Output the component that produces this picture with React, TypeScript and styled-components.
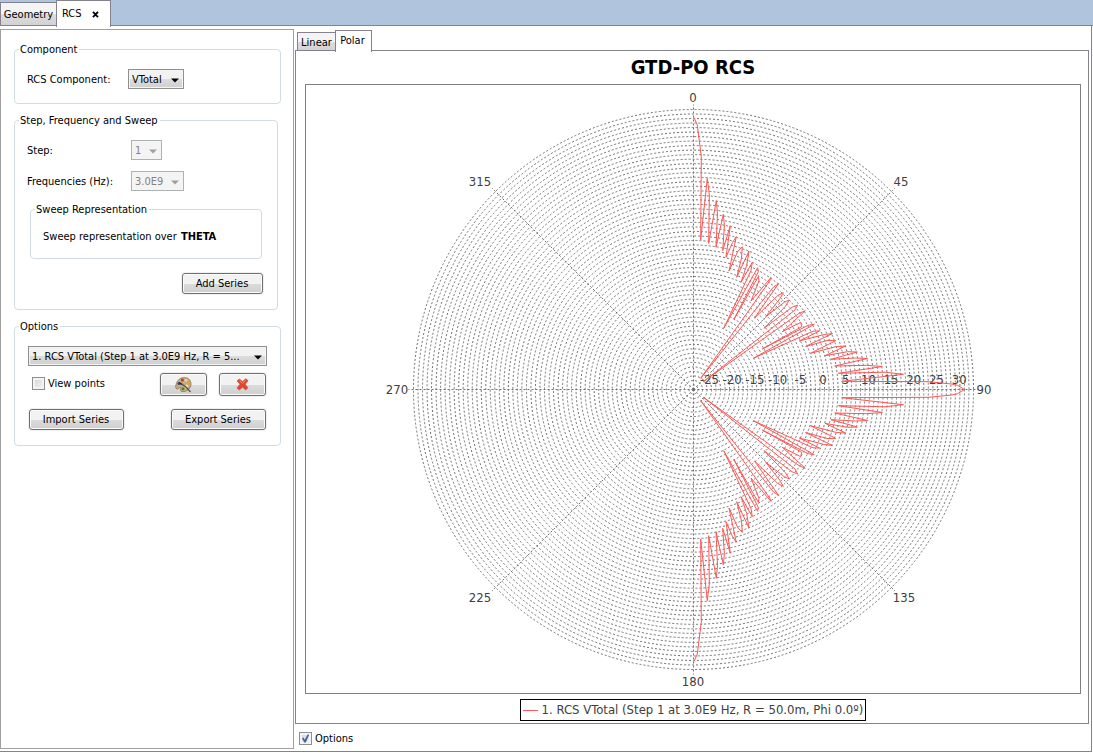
import React from "react";
import styled, { createGlobalStyle, css } from "styled-components";

const GlobalStyle = createGlobalStyle`
  *, *::before, *::after { box-sizing: border-box; }
  body {
    margin: 0;
    background: #fff;
    color: #000;
    font: 11px/14px "DejaVu Sans Condensed", "DejaVu Sans", sans-serif;
  }
`;

const Page = styled.div`
  display: flex;
  flex-direction: column;
  min-height: 100vh;
  padding: 0 1px 2px 0;
`;

const TopTabs = styled.nav`
  display: flex;
  align-items: flex-end;
  height: 26px;
  margin-right: -1px;
  background: #b0c4de;
  box-shadow: inset 0 -1px #83838f;
`;

const tabBase = css`
  position: relative;
  display: flex;
  align-items: center;
  justify-content: center;
  padding: 2px 0 0;
  border: 1px solid #83838f;
  color: #000;
  font: inherit;
  white-space: nowrap;
`;

const Tab = styled.button<{ $active?: boolean; $width: number }>`
  ${tabBase}
  width: ${(p) => p.$width}px;
  ${(p) =>
    p.$active
      ? css`
          align-self: stretch;
          justify-content: flex-start;
          margin: 0 0 -1px -1px;
          padding: 0 0 0 5px;
          gap: 10px;
          border-bottom: 0;
          background: #fff;
          z-index: 1;
        `
      : css`
          height: 24px;
          background: linear-gradient(#f4f4f4 0 50%, #dedede 50%, #d2d2d2);
        `}
`;

const Workspace = styled.main`
  display: flex;
  flex: 1;
  border: solid #83838f;
  border-width: 0 1px 1px 0;
`;

const Sidebar = styled.aside`
  display: flex;
  flex-direction: column;
  flex: 0 0 294px;
  margin: 3px 0 2px;
  padding: 11px 12px 12px 13px;
  border: 1px solid #a0a0a0;
`;

const Group = styled.fieldset<{ $inset?: number; $after?: number }>`
  min-width: 0;
  margin: 0 ${(p) => p.$inset ?? 0}px ${(p) => p.$after ?? 0}px 0;
  padding: 0;
  border: 1px solid #d0dce4;
  border-radius: 4px;
`;

const NestedGroup = styled(Group)`
  margin: 10px 15px 14px 15px;
`;

const GroupTitle = styled.legend`
  margin-left: 4px;
  padding: 2px 2px 0 1px;
  line-height: 14px;
`;

const Field = styled.div<{ $label: number }>`
  display: grid;
  grid-template-columns: ${(p) => p.$label}px auto;
  align-items: center;
  justify-content: start;
  padding-left: 12px;
`;

const FieldLabel = styled.label`
  padding-top: 2px;
`;

const FieldStack = styled.div<{ $pad: string }>`
  display: flex;
  flex-direction: column;
  gap: 11px;
  padding: ${(p) => p.$pad};
`;

const SelectBox = styled.span<{ $width: number }>`
  position: relative;
  display: block;
  width: ${(p) => p.$width}px;
`;

const SelectInput = styled.select`
  display: block;
  width: 100%;
  height: 20px;
  padding: 2px 0 0 3px;
  appearance: none;
  border: 1px solid #8e8f8f;
  border-radius: 0;
  background: linear-gradient(#f2f2f2 0 50%, #dddddd 50%, #cfcfcf);
  box-shadow: inset 0 0 0 1px #f4f4f4;
  color: #000;
  font: inherit;

  &:disabled {
    border-color: #adb2b5;
    background: #f4f4f4;
    color: #838383;
    opacity: 1;
  }
`;

const SelectArrow = styled.svg`
  position: absolute;
  right: 5px;
  top: 9px;
  pointer-events: none;
`;

const Note = styled.p`
  margin: 0;
  padding: 13px 0 14px 12px;
  line-height: 14px;
`;

const Strong = styled.strong`
  margin-left: 1px;
`;

const Button = styled.button<{ $width: number; $tall?: boolean }>`
  display: flex;
  align-items: center;
  justify-content: center;
  width: ${(p) => p.$width}px;
  height: ${(p) => (p.$tall ? 23 : 21)}px;
  padding: 0 1px 0 0;
  border: 1px solid #707070;
  border-radius: 3px;
  background: linear-gradient(#f2f2f2 0 50%, #dcdcdc 50%, #cfcfcf);
  box-shadow: inset 0 0 0 1px #fbfbfb, 0 0 0 1px #f0f0f0;
  color: #000;
  font: inherit;
`;

const Row = styled.div<{ $pad: string; $justify?: string }>`
  display: flex;
  align-items: center;
  justify-content: ${(p) => p.$justify ?? "space-between"};
  padding: ${(p) => p.$pad};
`;

const IconButtons = styled.div`
  display: flex;
  gap: 12px;
`;

const CheckLabel = styled.label`
  display: inline-flex;
  align-items: center;
  gap: 3px;
  padding-bottom: 2px;
`;

const CheckBox = styled.span`
  position: relative;
  display: block;
  width: 13px;
  height: 13px;
`;

const CheckInput = styled.input`
  display: block;
  width: 13px;
  height: 13px;
  margin: 0;
  appearance: none;
  border: 1px solid #8e8f8f;
  background: linear-gradient(135deg, #cfd3d8, #f6f6f6);
  box-shadow: inset 0 0 0 2px #f4f4f4;

  & + svg {
    position: absolute;
    inset: 0;
    visibility: hidden;
    pointer-events: none;
  }

  &:checked + svg {
    visibility: visible;
  }
`;

const Viewer = styled.section`
  display: flex;
  flex: 1;
  flex-direction: column;
  min-width: 0;
  padding: 4px 2px 0 1px;
`;

const ViewTabs = styled.nav`
  display: flex;
  align-items: flex-end;
  height: 21px;
  padding-left: 2px;
`;

const ViewTab = styled.button<{ $active?: boolean; $width: number }>`
  ${tabBase}
  width: ${(p) => p.$width}px;
  height: ${(p) => (p.$active ? 22 : 19)}px;
  ${(p) =>
    p.$active
      ? css`
          margin: 0 0 -1px -1px;
          padding: 0 2px 2px 0;
          border-bottom: 0;
          background: #fff;
          z-index: 1;
        `
      : css`
          background: linear-gradient(#f4f4f4 0 50%, #dedede 50%, #d2d2d2);
        `}
`;

const ChartPanel = styled.figure`
  display: flex;
  flex: 1;
  flex-direction: column;
  align-items: center;
  margin: -1px 0 0;
  padding: 5px 7px 2px 9px;
  border: 1px solid #83838f;
`;

const ChartTitle = styled.h1`
  margin: 0 0 6px;
  font-size: 20px;
  line-height: 22px;
`;

const PlotFrame = styled.div`
  display: grid;
  flex: 1;
  width: 100%;
  border: 1px solid #808080;
`;

const PlotSvg = styled.svg`
  display: block;
  width: 100%;
  height: 0;
  min-height: 100%;
`;

const PlotText = styled.text`
  fill: #404040;
  font-size: 13px;
  text-anchor: middle;
`;

const Legend = styled.figcaption`
  display: flex;
  align-items: center;
  gap: 4px;
  height: 22px;
  margin-top: 5px;
  padding: 0 2px;
  border: 1px solid #000;
  color: #404040;
  font-size: 13px;
  white-space: nowrap;
`;

const Footer = styled.footer`
  display: flex;
  align-items: center;
  height: 27px;
  padding: 4px 0 0 4px;
`;

type Point = [number, number];

const CENTER_X = 387.5;
const CENTER_Y = 304.5;
const RADIUS = 280;
const RING_COUNT = 62;

/* Offsets from the plot centre (right, up) for theta from 0 to 90 degrees. */
const LOBE: Point[] = [
  [0.5, 272], [3.8, 264.5], [7.8, 232.8], [7.2, 149.5], [13.8, 211.2],
  [15.8, 194.5], [15.2, 146.2], [22.8, 188.8], [24, 176.3], [22.5, 142.2],
  [29.8, 175.2], [30.9, 163.9], [29.2, 138.8], [36.8, 163.8], [32.5, 132.2],
  [39, 147], [42.8, 152.8], [35.5, 118.5], [44.2, 138], [48.8, 142.8],
  [48, 131.5], [43.2, 112.2], [55.5, 138.5], [53.2, 124], [47.5, 107.2],
  [58.8, 127.2], [57.5, 119], [30.2, 61.2], [64.2, 121.8], [64.8, 117.8],
  [40.5, 70.2], [64.8, 112.8], [65.5, 108.8], [57.5, 88.5], [77.5, 112],
  [76.2, 108.5], [7.2, 11.2], [80, 102.5], [85.2, 106], [61, 71.5],
  [84.3, 94], [89.8, 96.8], [86.5, 91], [72.2, 72.8], [91, 87.4],
  [95.8, 89.5], [92, 83.3], [70.5, 61.2], [98.6, 82.3], [104.2, 84.5],
  [101.5, 79.5], [9.8, 7.8], [105.6, 76.2], [111.8, 78.8], [88.8, 57.8],
  [107.2, 67.2], [108.2, 62.8], [68.8, 40.5], [114.5, 64.2], [120.8, 65.2],
  [59.8, 31.2], [119.5, 58.3], [126.2, 58.6], [105.8, 48.5], [130.7, 55],
  [139, 56], [112, 43], [133.6, 49], [142.2, 48.8], [117, 36.2],
  [143, 43], [152.2, 43.5], [131.5, 33.8], [154, 37.8], [163.8, 37.5],
  [137.5, 30.2], [162, 31.5], [174, 31], [141.2, 23.5], [173.3, 24.2],
  [188.8, 23], [145, 16.2], [191.5, 17.3], [210, 15.2], [148.2, 8.2],
  [234.8, 7.8], [258.2, 5.5], [264, 4.2],
];

const seriesPath = [
  ...LOBE.map(([dx, dy]) => [CENTER_X + dx, CENTER_Y - dy]),
  [CENTER_X + 271, CENTER_Y],
  ...[...LOBE].reverse().map(([dx, dy]) => [CENTER_X + dx, CENTER_Y + dy]),
]
  .map((point) => point.join(","))
  .join(" ");

const ANGLE_LABELS = [
  { text: "0", x: 387, y: 17 },
  { text: "45", x: 595, y: 101 },
  { text: "90", x: 678, y: 309 },
  { text: "135", x: 598, y: 517 },
  { text: "180", x: 387, y: 601 },
  { text: "225", x: 174, y: 517 },
  { text: "270", x: 91, y: 309 },
  { text: "315", x: 174, y: 101 },
];

const RADIAL_LABELS = [-25, -20, -15, -10, -5, 0, 5, 10, 15, 20, 25, 30];

function PolarPlot() {
  return (
    <PlotSvg viewBox="0 0 774 608" role="img" aria-label="Polar plot of RCS over theta">
      <g fill="none" stroke="#707070" strokeWidth="1" strokeDasharray="2 2">
        {Array.from({ length: RING_COUNT }, (_, i) => (
          <circle key={i} cx={CENTER_X} cy={CENTER_Y} r={(RADIUS * (i + 1)) / RING_COUNT} />
        ))}
        {Array.from({ length: 8 }, (_, i) => {
          const angle = (i * Math.PI) / 4;
          return (
            <line
              key={i}
              x1={CENTER_X}
              y1={CENTER_Y}
              x2={CENTER_X + Math.sin(angle) * (RADIUS + 5)}
              y2={CENTER_Y - Math.cos(angle) * (RADIUS + 5)}
            />
          );
        })}
      </g>
      {ANGLE_LABELS.map((label) => (
        <PlotText key={label.text} x={label.x} y={label.y}>
          {label.text}
        </PlotText>
      ))}
      {RADIAL_LABELS.map((value) => (
        <PlotText key={value} x={517 + value * 4.54} y={299}>
          {value}
        </PlotText>
      ))}
      <polyline points={seriesPath} fill="none" stroke="#ff5555" strokeWidth="1" />
    </PlotSvg>
  );
}

function Select({
  id,
  width,
  value,
  disabled,
  label,
}: {
  id: string;
  width: number;
  value: string;
  disabled?: boolean;
  label?: string;
}) {
  return (
    <SelectBox $width={width}>
      <SelectInput id={id} disabled={disabled} aria-label={label}>
        <option>{value}</option>
      </SelectInput>
      <SelectArrow width="8" height="5" viewBox="0 0 8 5" aria-hidden="true">
        <path d="M0 0.5h8L4 4.5z" fill={disabled ? "#a0a0a0" : "#000"} />
      </SelectArrow>
    </SelectBox>
  );
}

function Check({ text, checked }: { text: string; checked?: boolean }) {
  return (
    <CheckLabel>
      <CheckBox>
        <CheckInput type="checkbox" defaultChecked={checked} />
        <svg width="13" height="13" viewBox="0 0 13 13" aria-hidden="true">
          <path d="M3 6.2l1.4-.6 1.4 2.2L8.6 2.4l1.6.2-3.4 8H5.3z" fill="#42609c" />
        </svg>
      </CheckBox>
      {text}
    </CheckLabel>
  );
}

function PaletteIcon() {
  return (
    <svg width="17" height="16" viewBox="0 0 17 16" aria-hidden="true">
      <path
        d="M6 1.2C9-.2 13.5.6 15.2 3.6c1.4 2.6 1 6-1 8.2-1.8 2-4.4 3-7 2.8-1.6-.2-1.8-1.4-1.4-2.6.3-1-.4-1.6-1.4-1.2L2.6 12C1 12.2.4 10.4.8 8.6 1.4 5.2 3 2.4 6 1.2z"
        fill="#c9ab7c"
        stroke="#8b7350"
        strokeWidth=".8"
      />
      <circle cx="7.4" cy="3" r="1.5" fill="#c0392b" />
      <circle cx="11" cy="3.2" r="1.3" fill="#e8d9a8" />
      <circle cx="13.3" cy="6" r="1.4" fill="#d9a72b" />
      <circle cx="4" cy="6.6" r="1.5" fill="#2c4c9c" />
      <circle cx="8" cy="11.8" r="1.5" fill="#3f8a35" />
      <circle cx="11.8" cy="9" r="1.3" fill="#f1ead8" />
      <path d="M5 6.2l5.5 3.2 5 5.6" fill="none" stroke="#4a4f58" strokeWidth="1.2" />
      <path d="M4 5.6l3 1.8" stroke="#1d2f66" strokeWidth="1.6" />
    </svg>
  );
}

function DeleteIcon() {
  return (
    <svg width="13" height="13" viewBox="0 0 13 13" aria-hidden="true">
      <path
        d="M3.2 1L6.6 3.6 9.8.8l2.2 1.8-2.8 3.6 2.6 3.6-2 2.2-3.2-2.8L3.2 12 1 10l3-3.8L1.2 3z"
        fill="#e8432c"
        stroke="#c8563f"
        strokeWidth=".8"
        strokeLinejoin="round"
      />
      <path d="M3.4 2.4l3.2 2.8L9.6 2.4" fill="none" stroke="#f58a70" strokeWidth="1" />
    </svg>
  );
}

function CloseIcon() {
  return (
    <svg width="7" height="7" viewBox="0 0 7 7" aria-hidden="true">
      <path d="M1 .8l5 5.4M6 .8L1 6.2" stroke="#000" strokeWidth="1.8" />
    </svg>
  );
}

export default function App() {
  return (
    <>
      <GlobalStyle />
      <Page>
        <TopTabs>
          <Tab $width={57}>Geometry</Tab>
          <Tab $width={55} $active>
            RCS <CloseIcon />
          </Tab>
        </TopTabs>
        <Workspace>
          <Sidebar>
            <Group $after={8}>
              <GroupTitle>Component</GroupTitle>
              <FieldStack $pad="12px 0 14px">
                <Field $label={101}>
                  <FieldLabel htmlFor="component">RCS Component:</FieldLabel>
                  <Select id="component" width={56} value="VTotal" />
                </Field>
              </FieldStack>
            </Group>

            <Group $inset={3} $after={8}>
              <GroupTitle>Step, Frequency and Sweep</GroupTitle>
              <FieldStack $pad="12px 0 0">
                <Field $label={104}>
                  <FieldLabel htmlFor="step">Step:</FieldLabel>
                  <Select id="step" width={31} value="1" disabled />
                </Field>
                <Field $label={104}>
                  <FieldLabel htmlFor="frequency">Frequencies (Hz):</FieldLabel>
                  <Select id="frequency" width={53} value="3.0E9" disabled />
                </Field>
              </FieldStack>
              <NestedGroup>
                <GroupTitle>Sweep Representation</GroupTitle>
                <Note>
                  Sweep representation over <Strong>THETA</Strong>
                </Note>
              </NestedGroup>
              <Row $pad="0 14px 15px" $justify="flex-end">
                <Button $width={81}>Add Series</Button>
              </Row>
            </Group>

            <Group>
              <GroupTitle>Options</GroupTitle>
              <Row $pad="12px 13px 7px">
                <Select
                  id="series"
                  label="Series"
                  width={239}
                  value="1. RCS VTotal (Step 1 at 3.0E9 Hz, R = 5..."
                />
              </Row>
              <Row $pad="0 14px 13px 17px">
                <Check text="View points" />
                <IconButtons>
                  <Button $width={47} $tall aria-label="Series color">
                    <PaletteIcon />
                  </Button>
                  <Button $width={47} $tall aria-label="Delete series">
                    <DeleteIcon />
                  </Button>
                </IconButtons>
              </Row>
              <Row $pad="0 14px 15px">
                <Button $width={95}>Import Series</Button>
                <Button $width={95}>Export Series</Button>
              </Row>
            </Group>
          </Sidebar>

          <Viewer>
            <ViewTabs>
              <ViewTab $width={39}>Linear</ViewTab>
              <ViewTab $width={37} $active>
                Polar
              </ViewTab>
            </ViewTabs>
            <ChartPanel>
              <ChartTitle>GTD-PO RCS</ChartTitle>
              <PlotFrame>
                <PolarPlot />
              </PlotFrame>
              <Legend>
                <svg width="15" height="3" viewBox="0 0 15 3" aria-hidden="true">
                  <path d="M0 1.5h15" stroke="#ff5555" />
                </svg>
                1. RCS VTotal (Step 1 at 3.0E9 Hz, R = 50.0m, Phi 0.0º)
              </Legend>
            </ChartPanel>
            <Footer>
              <Check text="Options" checked />
            </Footer>
          </Viewer>
        </Workspace>
      </Page>
    </>
  );
}
